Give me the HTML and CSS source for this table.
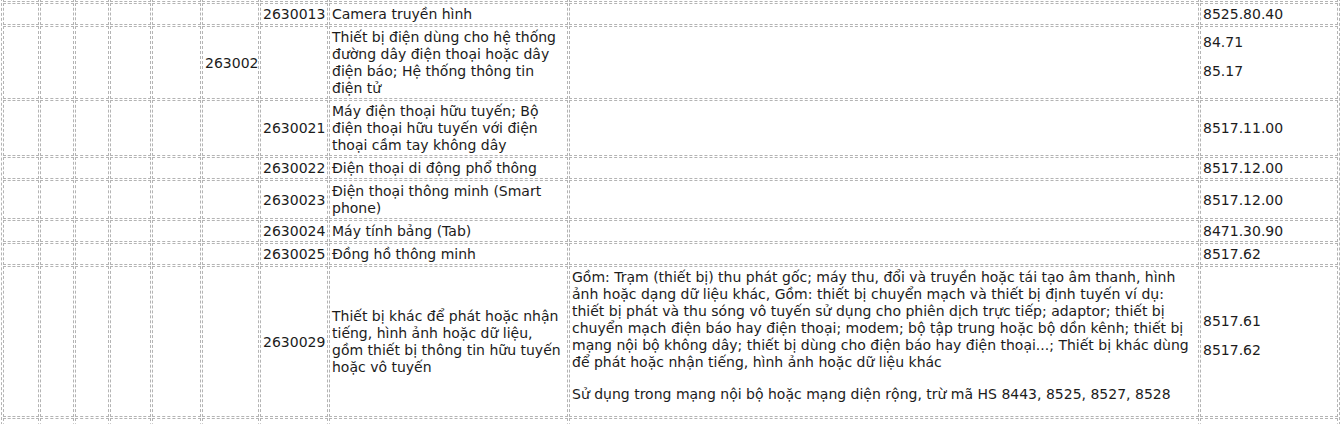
FILE: index.html
```html
<!DOCTYPE html>
<html lang="vi">
<head>
<meta charset="utf-8">
<title>Danh mục</title>
<link rel="stylesheet" href="styles.css">
</head>
<body>
<div class="viewport">
<div class="wrap">
<table class="grid">
<colgroup>
<col class="w1"><col class="w2"><col class="w3"><col class="w4"><col class="w5">
<col class="w6"><col class="w7"><col class="w8"><col class="w9"><col class="w10">
</colgroup>
<tbody>
<tr><td></td><td></td><td></td><td></td><td></td><td></td><td></td><td>&nbsp;</td><td></td><td></td></tr>
<tr><td></td><td></td><td></td><td></td><td></td><td></td><td>2630013</td><td>Camera truyền hình</td><td></td><td>8525.80.40</td></tr>
<tr><td></td><td></td><td></td><td></td><td></td><td>263002</td><td></td><td>Thiết bị điện dùng cho hệ thống đường dây điện thoại hoặc dây điện báo; Hệ thống thông tin điện tử</td><td></td><td><p>84.71</p><p>85.17</p></td></tr>
<tr><td></td><td></td><td></td><td></td><td></td><td></td><td>2630021</td><td>Máy điện thoại hữu tuyến; Bộ điện thoại hữu tuyến với điện thoại cầm tay không dây</td><td></td><td>8517.11.00</td></tr>
<tr><td></td><td></td><td></td><td></td><td></td><td></td><td>2630022</td><td>Điện thoại di động phổ thông</td><td></td><td>8517.12.00</td></tr>
<tr><td></td><td></td><td></td><td></td><td></td><td></td><td>2630023</td><td>Điện thoại thông minh (Smart phone)</td><td></td><td>8517.12.00</td></tr>
<tr><td></td><td></td><td></td><td></td><td></td><td></td><td>2630024</td><td>Máy tính bảng (Tab)</td><td></td><td>8471.30.90</td></tr>
<tr><td></td><td></td><td></td><td></td><td></td><td></td><td>2630025</td><td>Đồng hồ thông minh</td><td></td><td>8517.62</td></tr>
<tr><td></td><td></td><td></td><td></td><td></td><td></td><td>2630029</td><td>Thiết bị khác để phát hoặc nhận tiếng, hình ảnh hoặc dữ liệu, gồm thiết bị thông tin hữu tuyến hoặc vô tuyến</td><td><p class="gap">Gồm: Trạm (thiết bị) thu phát gốc; máy thu, đổi và truyền hoặc tái tạo âm thanh, hình ảnh hoặc dạng dữ liệu khác, Gồm: thiết bị chuyển mạch và thiết bị định tuyến ví dụ: thiết bị phát và thu sóng vô tuyến sử dụng cho phiên dịch trực tiếp; adaptor; thiết bị chuyển mạch điện báo hay điện thoại; modem; bộ tập trung hoặc bộ dồn kênh; thiết bị mạng nội bộ không dây; thiết bị dùng cho điện báo hay điện thoại...; Thiết bị khác dùng để phát hoặc nhận tiếng, hình ảnh hoặc dữ liệu khác</p><p>Sử dụng trong mạng nội bộ hoặc mạng diện rộng, trừ mã HS 8443, 8525, 8527, 8528</p></td><td><p>8517.61</p><p>8517.62</p></td></tr>
<tr class="tail"><td></td><td></td><td></td><td></td><td></td><td></td><td></td><td></td><td></td><td></td></tr>
</tbody>
</table>
</div>
</div>
</body>
</html>
```

FILE: styles.css
```css
body {
  margin: 0;
  background: #fff;
  color: #1c1c1c;
  font-family: "DejaVu Sans", Verdana, sans-serif;
  font-size: 14px;
  line-height: 17px;
}
.viewport {
  height: 424px;
  overflow: hidden;
}
.wrap {
  padding-left: 1px;
  margin-top: -22px;
}
.grid {
  table-layout: fixed;
  width: 1339px;
  border-collapse: separate;
  border-spacing: 1px;
  border: 1px dashed #b4b4b4;
}
.grid td {
  border: 1px dashed #b4b4b4;
  padding: 2px 2px 1px 2px;
  vertical-align: middle;
  text-align: left;
}
.grid p {
  margin: 0 0 12px 0;
}
.grid p.gap {
  margin-bottom: 15px;
}
.tail td {
  height: 30px;
}
.w1 { width: 36px; }
.w2 { width: 34px; }
.w3 { width: 34px; }
.w4 { width: 41px; }
.w5 { width: 49px; }
.w6 { width: 57px; }
.w7 { width: 68px; }
.w8 { width: 239px; }
.w9 { width: 630px; }
.w10 { width: 138px; }
```
